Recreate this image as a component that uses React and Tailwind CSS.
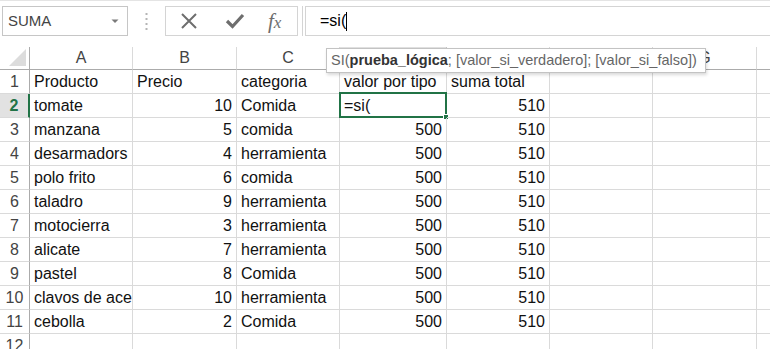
import React from 'react';

const rows = [
  ['Producto', 'Precio', 'categoria', 'valor por tipo', 'suma total'],
  ['tomate', 10, 'Comida', '=si(', 510],
  ['manzana', 5, 'comida', 500, 510],
  ['desarmadors', 4, 'herramienta', 500, 510],
  ['polo frito', 6, 'comida', 500, 510],
  ['taladro', 9, 'herramienta', 500, 510],
  ['motocierra', 3, 'herramienta', 500, 510],
  ['alicate', 7, 'herramienta', 500, 510],
  ['pastel', 8, 'Comida', 500, 510],
  ['clavos de acero', 10, 'herramienta', 500, 510],
  ['cebolla', 2, 'Comida', 500, 510],
  ['', '', '', '', ''],
];

const cols = ['A', 'B', 'C', 'D', 'E', 'F', 'G', 'H'];

const Cell = ({ value, selected }) => {
  const isNum = typeof value === 'number';
  return (
    <div
      className={`relative h-[24px] border-r border-b border-[#dadada] flex items-center whitespace-nowrap ${
        isNum ? 'justify-end pr-[4px]' : 'pl-[4px]'
      } ${selected ? '' : 'overflow-hidden'}`}
    >
      {value}
      {selected && (
        <div className="absolute -top-[2px] -left-[1px] -right-[1px] -bottom-[1px] border-2 border-[#217346]">
          <div className="absolute -right-[4px] -bottom-[4px] w-[6px] h-[6px] bg-[#217346] border border-white" />
        </div>
      )}
    </div>
  );
};

const App = () => {
  return (
    <div className="w-[770px] h-[349px] bg-white overflow-hidden relative font-['Liberation_Sans',sans-serif] text-[16px] text-[#111]">
      {/* barra de formulas */}
      <div className="h-[47px] border-t border-[#e4e4e4] pt-[5px] flex items-start">
        <div className="ml-[2px] w-[126px] h-[30px] border border-[#c6c6c6] flex items-center justify-between pl-[5px] pr-[8px] text-[15px] text-[#444]">
          <span>SUMA</span>
          <svg width="8" height="5" viewBox="0 0 8 5">
            <path d="M0.5 0.5 L4 4 L7.5 0.5 Z" fill="#7a7a7a" />
          </svg>
        </div>
        <div className="w-[37px] h-[30px] flex items-center justify-center">
          <svg width="3" height="18" viewBox="0 0 3 18">
            <rect x="0.5" y="1" width="2" height="2" fill="#b5b5b5" />
            <rect x="0.5" y="6" width="2" height="2" fill="#b5b5b5" />
            <rect x="0.5" y="11" width="2" height="2" fill="#b5b5b5" />
            <rect x="0.5" y="16" width="2" height="2" fill="#b5b5b5" />
          </svg>
        </div>
        <div className="w-[133px] h-[30px] border border-[#d4d4d4] flex items-center pl-[14px]">
          <svg width="18" height="18" viewBox="0 0 18 18">
            <path d="M2 2 L16 16 M16 2 L2 16" stroke="#6e6e6e" strokeWidth="2" />
          </svg>
          <svg className="ml-[27px]" width="20" height="18" viewBox="0 0 20 18">
            <path d="M2 9 L7.5 14.5 L18 3" stroke="#6e6e6e" strokeWidth="3.2" fill="none" />
          </svg>
          <span className="ml-[23px] font-['Liberation_Serif',serif] italic text-[21px] leading-none text-[#6e6e6e]">
            f<span className="text-[17px]">x</span>
          </span>
        </div>
        <div className="ml-[4px] w-[1px] h-[30px] bg-[#d4d4d4]" />
        <div className="ml-[2px] w-[1px] h-[30px] bg-[#d4d4d4]" />
        <div className="flex-1 h-[30px] border-y border-[#d4d4d4] flex items-center pl-[14px] text-[16px] text-black">
          <span>=si(</span>
          <span className="w-[1px] h-[19px] bg-black" />
        </div>
      </div>

      {/* hoja */}
      <div className="grid w-[861px] grid-cols-[30px_103px_104px_103px_107px_103px_103px_104px_104px]">
        <div className="relative h-[23px] border-r border-b border-[#ababab]">
          <div className="absolute right-[3px] bottom-[3px] w-0 h-0 border-l-[17px] border-l-transparent border-b-[17px] border-b-[#dcdcdc]" />
        </div>
        {cols.map((c) => (
          <div
            key={c}
            className={`h-[23px] flex items-center justify-center text-[#444] ${
              c === 'D'
                ? 'bg-[#e2e2e2] border-r border-[#c6c6c6] border-b-2 border-b-[#217346] text-[#217346]'
                : 'border-r border-[#dadada] border-b border-b-[#ababab]'
            }`}
          >
            {c}
          </div>
        ))}

        {rows.map((r, i) => (
          <React.Fragment key={i}>
            <div
              className={`h-[24px] flex items-center justify-center border-b border-[#dadada] ${
                i === 1
                  ? 'bg-[#e2e2e2] text-[#217346] font-bold border-r-2 border-r-[#217346]'
                  : 'text-[#444] border-r border-r-[#ababab]'
              }`}
            >
              {i + 1}
            </div>
            {r.map((v, j) => (
              <Cell key={j} value={v} selected={i === 1 && j === 3} />
            ))}
            <div className="h-[24px] border-r border-b border-[#dadada]" />
            <div className="h-[24px] border-r border-b border-[#dadada]" />
            <div className="h-[24px] border-r border-b border-[#dadada]" />
          </React.Fragment>
        ))}
      </div>

      {/* ayuda de la funcion */}
      <div className="absolute left-[326px] top-[48px] h-[25px] w-[380px] bg-white border border-[#c3c3c3] shadow-[1px_2px_3px_rgba(0,0,0,0.15)] flex items-center pl-[4px] text-[14.5px] text-[#666] whitespace-nowrap">
        <span>SI(</span>
        <span className="font-bold text-[#333]">prueba_lógica</span>
        <span>; [valor_si_verdadero]; [valor_si_falso])</span>
      </div>
    </div>
  );
};

export default App;
